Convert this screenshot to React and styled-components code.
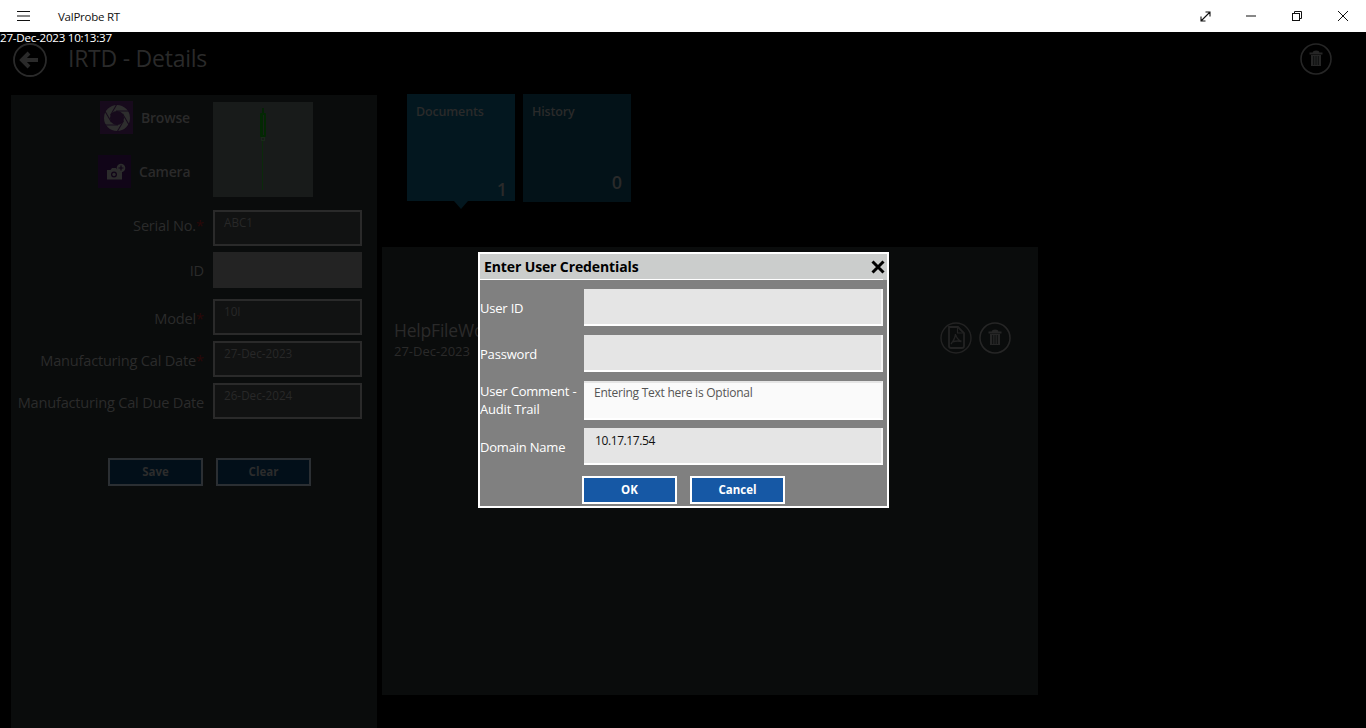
import React from "react"
import styled, { createGlobalStyle } from "styled-components"

const Global = createGlobalStyle`
  html, body { margin: 0; padding: 0; background: #000; }
  * { box-sizing: border-box; }
  body { font-family: "Open Sans", "Noto Sans", sans-serif; }
`

const Page = styled.div`
  position: relative;
  width: 1366px;
  height: 728px;
  overflow: hidden;
  background: #000;
  display: flex;
  flex-direction: column;
`

/* window chrome */
const TitleBar = styled.header`
  height: 32px;
  flex: none;
  background: #fff;
  display: flex;
  align-items: center;
`
const MenuButton = styled.div`
  width: 46px;
  height: 32px;
  display: flex;
  align-items: center;
  justify-content: center;
  margin-right: 12px;
`
const AppName = styled.span`
  flex: 1;
  font-size: 11.5px;
  color: #111;
  letter-spacing: -0.25px;
`
const WinButton = styled.div`
  width: 46px;
  height: 32px;
  display: flex;
  align-items: center;
  justify-content: center;
`

const Stamp = styled.div`
  height: 11px;
  font-size: 11.6px;
  line-height: 12px;
  color: #fff;
  white-space: nowrap;
  letter-spacing: -0.24px;
  position: relative;
  z-index: 2;
`

const PageHead = styled.div`
  height: 52px;
  flex: none;
  display: flex;
  align-items: flex-start;
  padding-left: 13px;
  padding-right: 34px;
`
const PageTitle = styled.h1`
  flex: 1;
  margin: 0 0 0 21px;
  font-size: 23px;
  line-height: 30px;
  font-weight: 400;
  color: #2a2a2a;
  letter-spacing: -0.25px;
`

const Main = styled.div`
  flex: 1;
  display: flex;
  padding-left: 11px;
  gap: 5px;
`

/* left form panel */
const FormPanel = styled.section`
  width: 366px;
  background: #0a0c0c;
  display: flex;
  flex-direction: column;
`
const MediaRow = styled.div`
  height: 115px;
  flex: none;
  display: flex;
  padding-top: 7px;
  padding-left: 87px;
`
const MediaButtons = styled.div`
  width: 115px;
  display: flex;
  flex-direction: column;
  gap: 21px;
  margin-top: -1px;
`
const MediaButton = styled.div`
  display: flex;
  align-items: center;
  gap: 8px;
  margin-left: ${p => p.$shift || 0}px;
`
const MediaTile = styled.div`
  width: 33px;
  height: 33px;
  background: ${p => p.$bg};
  display: flex;
  align-items: center;
  justify-content: center;
`
const MediaLabel = styled.span`
  font-size: 14px;
  font-weight: 600;
  color: #2a2a2a;
  letter-spacing: -0.2px;
`
const Preview = styled.div`
  width: 100px;
  height: 95px;
  background: #181b1a;
  display: flex;
  align-items: flex-start;
  justify-content: center;
  padding-top: 6px;
`
const Row = styled.div`
  display: flex;
  align-items: center;
  height: 36px;
  margin-top: ${p => p.$gap}px;
`
const Label = styled.label`
  width: 193px;
  margin-right: 9px;
  margin-top: ${p => Math.max(p.$drop, 0) * 2}px;
  margin-bottom: ${p => Math.max(-p.$drop, 0) * 2}px;
  text-align: right;
  font-size: 14.6px;
  color: #2b2b2b;
  white-space: nowrap;
  letter-spacing: -0.22px;
  i {
    font-style: normal;
    color: #2a0808;
    letter-spacing: 0;
  }
`
const Field = styled.div`
  width: 149px;
  height: 36px;
  background: ${p => (p.$filled ? "#232323" : "#111212")};
  border: 2px solid ${p => (p.$filled ? "#232323" : "#2a2a2a")};
  padding: 3px 9px;
  font-size: 11.7px;
  line-height: 15px;
  color: #282828;
`
const FormActions = styled.div`
  display: flex;
  gap: 13px;
  margin-top: 39px;
  padding-left: 97px;
`
const GhostButton = styled.div`
  width: 95px;
  height: 28px;
  background: #020f19;
  border: 2px solid #2b2f33;
  padding-bottom: 2px;
  display: flex;
  align-items: center;
  justify-content: center;
  font-size: 11.5px;
  font-weight: 700;
  color: #2c2c2c;
`

/* right column */
const Content = styled.section`
  width: 656px;
  display: flex;
  flex-direction: column;
`
const Tiles = styled.div`
  height: 153px;
  flex: none;
  display: flex;
  gap: 8px;
  padding-left: 25px;
  margin-top: -1px;
`
const Tile = styled.div`
  position: relative;
  width: 108px;
  height: ${p => (p.$active ? 107 : 108)}px;
  background: ${p => (p.$active ? "#03171f" : "#031218")};
  padding: 9px 9px;
  font-size: 12.5px;
  font-weight: 600;
  color: #2a2a2a;
  letter-spacing: -0.15px;
  ${p =>
    p.$active &&
    `&::after {
      content: "";
      position: absolute;
      left: 47px;
      top: 100%;
      border-left: 7px solid transparent;
      border-right: 7px solid transparent;
      border-top: 8px solid #03171f;
    }`}
`
const Count = styled.span`
  position: absolute;
  right: ${p => p.$right}px;
  bottom: ${p => p.$low}px;
  font-size: 18px;
  line-height: 20px;
  font-weight: 600;
`
const DocPanel = styled.div`
  height: 448px;
  background: #0a0c0c;
  display: flex;
  justify-content: space-between;
  padding: 71px 27px 0 12px;
`
const DocName = styled.div`
  font-size: 17.5px;
  line-height: 24px;
  color: #2a2a2a;
  letter-spacing: -0.2px;
`
const DocDate = styled.div`
  font-size: 13px;
  line-height: 14px;
  color: #2a2a2a;
  margin-top: 2px;
`
const DocIcons = styled.div`
  display: flex;
  gap: 7px;
  margin-top: 4px;
`

/* credentials dialog, sits over the dimmed page */
const Dialog = styled.div`
  position: absolute;
  left: 478px;
  top: 252px;
  width: 411px;
  height: 256px;
  background: #808080;
  border: 2px solid #fff;
  display: flex;
  flex-direction: column;
`
const DialogHead = styled.div`
  position: relative;
  height: 26px;
  flex: none;
  background: #cbcdcc;
  display: flex;
  align-items: center;
  justify-content: space-between;
  padding: 0 2px 1px 4px;
  font-size: 14px;
  font-weight: 700;
  color: #000;
  letter-spacing: -0.12px;
  &::after {
    content: "";
    position: absolute;
    left: 0;
    right: 4px;
    bottom: 0;
    height: 1px;
    background: #fff;
  }
`
const DialogForm = styled.div`
  display: flex;
  flex-direction: column;
  padding-top: 9px;
`
const DialogRow = styled.div`
  display: grid;
  grid-template-columns: 104px 299px;
  align-items: center;
  margin-bottom: ${p => p.$gap}px;
`
const DialogLabel = styled.label`
  font-size: 13px;
  line-height: 18px;
  color: #fff;
  letter-spacing: -0.2px;
  margin-bottom: ${p => (p.$raised ? 2 : 0)}px;
`
const Input = styled.div`
  height: ${p => p.$h || 37}px;
  background: ${p => (p.$light ? "#fafafa" : "#e5e5e5")};
  border-style: solid;
  border-color: #e5e5e5 #f6f6f6 #fff #e5e5e5;
  border-width: ${p => (p.$light ? "2px" : "0")} 2px 2px 0;
  padding: ${p => (p.$light ? "2px" : "5px")} 10px;
  padding-left: ${p => (p.$light ? "10px" : "11px")};
  font-size: 12px;
  line-height: 16px;
  letter-spacing: ${p => (p.$light ? "-0.25px" : "-0.4px")};
  color: ${p => (p.$light ? "#555" : "#111")};
`
const DialogActions = styled.div`
  display: flex;
  gap: 13px;
  padding-left: 102px;
  margin-top: 2px;
`
const DialogButton = styled.div`
  width: 95px;
  height: 28px;
  background: #1658a5;
  border: 2px solid #fff;
  padding-bottom: 2px;
  display: flex;
  align-items: center;
  justify-content: center;
  font-size: 11.5px;
  font-weight: 700;
  color: #fff;
`

const Hamburger = () => (
  <svg width="13" height="10" viewBox="0 0 13 10" stroke="#111" strokeWidth="1">
    <path d="M0 .5h13M0 5h13M0 9.500h13" />
  </svg>
)
const Expand = () => (
  <svg width="11" height="11" viewBox="0 0 11 11" fill="none" stroke="#111" strokeWidth="1.100">
    <path d="M1 10 10 1M5.500 1H10v4.500M1 5.500V10h4.500" />
  </svg>
)
const Minimize = () => (
  <svg width="10" height="2" viewBox="0 0 10 2" stroke="#111" strokeWidth="1">
    <path d="M0 1h10" />
  </svg>
)
const Restore = () => (
  <svg width="10" height="10" viewBox="0 0 10 10" fill="none" stroke="#111" strokeWidth="1">
    <rect x=".5" y="2.500" width="7" height="7" />
    <path d="M2.500 2.500v-2h7v7h-2" />
  </svg>
)
const CloseX = () => (
  <svg width="10" height="10" viewBox="0 0 10 10" stroke="#111" strokeWidth="1">
    <path d="M0 0l10 10M10 0 0 10" />
  </svg>
)
const BackIcon = () => (
  <svg width="34" height="34" viewBox="0 0 34 34" fill="none" stroke="#2a2a2a">
    <circle cx="17" cy="17" r="16" strokeWidth="1.800" />
    <path d="M25 17H10M16 10l-7 7 7 7" strokeWidth="4" />
  </svg>
)
const TrashIcon = () => (
  <svg width="32" height="32" viewBox="0 0 32 32" fill="none" stroke="#262626">
    <circle cx="16" cy="16" r="15" strokeWidth="1.600" />
    <path d="M9.500 10.500h13M13.500 10c0-2 5-2 5 0" strokeWidth="1.800" />
    <path d="M11 12h10v11H11z" fill="#262626" stroke="none" />
    <path d="M13.700 13v9M16 13v9M18.300 13v9" stroke="#0a0c0c" strokeWidth=".9" />
  </svg>
)
const PdfIcon = () => (
  <svg width="32" height="32" viewBox="0 0 32 32" fill="none" stroke="#232323">
    <circle cx="16" cy="16" r="15" strokeWidth="1.400" />
    <path d="M9 5h9l6 6v13a2 2 0 0 1-2 2H11a2 2 0 0 1-2-2z" strokeWidth="1.800" />
    <path d="M17.500 5.500v5.500H23.500" strokeWidth="1.200" />
    <path d="M15.500 12c.5 3 2 5.500 6 7.500M15.500 12c0 3-1.500 6-4.500 10M12 20c3-1 6-1.500 9.500-.5" strokeWidth="1.400" />
  </svg>
)
const ApertureIcon = () => (
  <svg width="28" height="28" viewBox="0 0 28 28" fill="none">
    <circle cx="14" cy="14" r="10" stroke="#2e2e2e" strokeWidth="6" />
    {[0, 60, 120, 180, 240, 300].map(a => (
      <path key={a} d="M13 7H27" stroke="#170a1c" strokeWidth="1" transform={`rotate(${a} 14 14)`} />
    ))}
  </svg>
)
const CameraIcon = () => (
  <svg width="33" height="33" viewBox="0 0 33 33" fill="#2c2c2c">
    <path d="M9 15h3.500l1.500-2h4l1.500 2H24v9.500H9z" />
    <circle cx="16" cy="19.500" r="3" fill="#110518" />
    <circle cx="16" cy="19.500" r="1.700" />
    <circle cx="23" cy="13" r="4.300" />
    <path d="M23 10.500v5M20.500 13h5" stroke="#110518" strokeWidth="1.200" />
  </svg>
)
const ProbeIcon = () => (
  <svg width="8" height="84" viewBox="0 0 8 84" fill="none">
    <path d="M4 0v6" stroke="#042404" strokeWidth="2" />
    <rect x="1" y="5" width="6" height="24" rx="1" fill="#032803" />
    <path d="M4.500 7v20" stroke="#1a1f1a" strokeWidth="1" />
    <rect x="2.500" y="29.500" width="3" height="3" fill="none" stroke="#1a2a1a" />
    <path d="M3.500 33v49" stroke="#0b2a0b" strokeWidth="1" />
  </svg>
)
const HeavyX = () => (
  <svg width="14" height="14" viewBox="0 0 14 14" stroke="#000" strokeWidth="3">
    <path d="M1.500 1.500l11 11M12.500 1.500l-11 11" />
  </svg>
)

const rows = [
  { label: "Serial No.", req: true, value: "ABC1", gap: 0, drop: -3 },
  { label: "ID", value: "", filled: true, gap: 6, drop: 0 },
  { label: "Model", req: true, value: "10I", gap: 11, drop: 1 },
  { label: "Manufacturing Cal Date", req: true, value: "27-Dec-2023", gap: 6, drop: 1 },
  { label: "Manufacturing Cal Due Date", value: "26-Dec-2024", gap: 6, drop: 1 },
]

export default function App() {
  return (
    <Page>
      <Global />
      <TitleBar>
        <MenuButton><Hamburger /></MenuButton>
        <AppName>ValProbe RT</AppName>
        <WinButton><Expand /></WinButton>
        <WinButton><Minimize /></WinButton>
        <WinButton><Restore /></WinButton>
        <WinButton><CloseX /></WinButton>
      </TitleBar>
      <Stamp>27-Dec-2023 10:13:37</Stamp>
      <PageHead>
        <BackIcon />
        <PageTitle>IRTD - Details</PageTitle>
        <TrashIcon />
      </PageHead>
      <Main>
        <FormPanel>
          <MediaRow>
            <MediaButtons>
              <MediaButton $shift={2}>
                <MediaTile $bg="#170a1c"><ApertureIcon /></MediaTile>
                <MediaLabel>Browse</MediaLabel>
              </MediaButton>
              <MediaButton>
                <MediaTile $bg="#110518"><CameraIcon /></MediaTile>
                <MediaLabel>Camera</MediaLabel>
              </MediaButton>
            </MediaButtons>
            <Preview><ProbeIcon /></Preview>
          </MediaRow>
          {rows.map(r => (
            <Row key={r.label} $gap={r.gap}>
              <Label $drop={r.drop}>{r.label}{r.req && <i>*</i>}</Label>
              <Field $filled={r.filled}>{r.value}</Field>
            </Row>
          ))}
          <FormActions>
            <GhostButton>Save</GhostButton>
            <GhostButton>Clear</GhostButton>
          </FormActions>
        </FormPanel>
        <Content>
          <Tiles>
            <Tile $active>
              Documents
              <Count $low={2} $right={8}>1</Count>
            </Tile>
            <Tile>
              History
              <Count $low={10} $right={9}>0</Count>
            </Tile>
          </Tiles>
          <DocPanel>
            <div>
              <DocName>HelpFileWord.pdf</DocName>
              <DocDate>27-Dec-2023</DocDate>
            </div>
            <DocIcons>
              <PdfIcon />
              <TrashIcon />
            </DocIcons>
          </DocPanel>
        </Content>
      </Main>
      <Dialog>
        <DialogHead>
          Enter User Credentials
          <HeavyX />
        </DialogHead>
        <DialogForm>
          <DialogRow $gap={9}>
            <DialogLabel>User ID</DialogLabel>
            <Input />
          </DialogRow>
          <DialogRow $gap={9}>
            <DialogLabel>Password</DialogLabel>
            <Input />
          </DialogRow>
          <DialogRow $gap={8}>
            <DialogLabel $raised>User Comment - Audit Trail</DialogLabel>
            <Input $light $h={39}>Entering Text here is Optional</Input>
          </DialogRow>
          <DialogRow $gap={9}>
            <DialogLabel>Domain Name</DialogLabel>
            <Input>10.17.17.54</Input>
          </DialogRow>
        </DialogForm>
        <DialogActions>
          <DialogButton>OK</DialogButton>
          <DialogButton>Cancel</DialogButton>
        </DialogActions>
      </Dialog>
    </Page>
  )
}
